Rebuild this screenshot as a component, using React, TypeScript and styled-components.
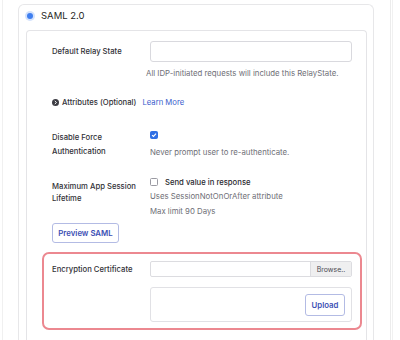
import React from "react";
import styled, { createGlobalStyle } from "styled-components";

const GlobalStyle = createGlobalStyle`
  html, body {
    margin: 0;
    padding: 0;
    background: #ffffff;
  }
  body {
    font-family: Inter, "Liberation Sans", Arial, sans-serif;
    color: #2f2f35;
    overflow: hidden;
  }
`;

const Page = styled.div`
  width: 393px;
  height: 340px;
  border-right: 1px solid #f1f1f1;
  box-sizing: border-box;
`;

const Frame = styled.div`
  margin-left: 2px;
  width: 389px;
  height: 340px;
  border-left: 1px solid #f0f0f0;
  border-right: 1px solid #ececec;
  box-sizing: border-box;
  padding: 4px 0 0 15px;
`;

const OuterCard = styled.section`
  width: 356px;
  height: 340px;
  border: 1px solid #e7e7e9;
  border-bottom: none;
  border-radius: 6px 6px 0 0;
  box-sizing: border-box;
`;

const CardHeader = styled.label`
  display: flex;
  align-items: center;
  gap: 6px;
  height: 25px;
  padding: 0 0 4px 6px;
  box-sizing: border-box;
  font-size: 9.5px;
  color: #1f1f24;
`;

const Radio = styled.span`
  width: 6px;
  height: 6px;
  border-radius: 50%;
  background: #3f7ff0;
  box-shadow: 0 0 0 2px #d3e2fc;
  margin: 0 2px 0 2px;
`;

const InnerCard = styled.div`
  margin: 0 6px 0 7px;
  height: 320px;
  border: 1px solid #e4e4e7;
  border-bottom: none;
  border-radius: 4px 4px 0 0;
  box-sizing: border-box;
  padding: 10px 14px 0 25px;
`;

const FieldRow = styled.div<{ $top?: number }>`
  display: grid;
  grid-template-columns: 98px 1fr;
  margin-top: ${(p) => p.$top ?? 0}px;
`;

const Label = styled.div<{ $pad?: number; $lh?: number }>`
  font-size: 7.7px;
  font-weight: 500;
  line-height: ${(p) => p.$lh ?? 13}px;
  color: #313137;
  padding-top: ${(p) => p.$pad ?? 0}px;
`;

const Control = styled.div`
  display: flex;
  flex-direction: column;
`;

const TextInput = styled.div`
  height: 21px;
  border: 1px solid #d9d9de;
  border-radius: 3px;
  box-sizing: border-box;
  background: #fff;
`;

const Help = styled.div<{ $top?: number; $shift?: number }>`
  font-size: 7.8px;
  line-height: 12px;
  color: #6f6f77;
  margin-top: ${(p) => p.$top ?? 0}px;
  margin-left: ${(p) => p.$shift ?? 0}px;
  white-space: nowrap;
`;

const AttrLine = styled.div`
  display: flex;
  align-items: center;
  gap: 3px;
  margin-top: 16px;
  height: 14px;
  font-size: 7.7px;
  font-weight: 500;
  color: #313137;
`;

const LearnMore = styled.a`
  color: #3a5ccc;
  font-weight: 400;
  margin-left: 3px;
  text-decoration: none;
`;

const CheckLine = styled.div<{ $h: number }>`
  display: flex;
  align-items: center;
  gap: 7px;
  height: ${(p) => p.$h}px;
  font-size: 7.7px;
  font-weight: 500;
  color: #2a2a30;
`;

const Box = styled.span<{ $on?: boolean }>`
  width: 8px;
  height: 8px;
  border-radius: 1.5px;
  box-sizing: border-box;
  display: inline-flex;
  align-items: center;
  justify-content: center;
  background: ${(p) => (p.$on ? "#2f6fe4" : "#fff")};
  border: 1px solid ${(p) => (p.$on ? "#2f6fe4" : "#9a9aa2")};
`;

const OutlineButton = styled.button<{ $w: number; $h: number }>`
  width: ${(p) => p.$w}px;
  height: ${(p) => p.$h}px;
  padding: 0;
  border: 1px solid #b3bbe4;
  border-radius: 3px;
  background: #fff;
  color: #3c50b4;
  font-family: inherit;
  font-size: 7.8px;
  font-weight: 600;
`;

const PreviewButton = styled(OutlineButton)`
  margin-top: 6px;
  display: block;
`;

const Highlight = styled.div`
  margin: 9px -10px 0 -10px;
  border: 2px solid #ec8890;
  border-radius: 7px;
  padding: 7px 8px 6px 8px;
`;

const FileInput = styled.div`
  display: flex;
  height: 16px;
  border: 1px solid #dcdce0;
  border-radius: 2px;
  box-sizing: border-box;
  overflow: hidden;
`;

const FileName = styled.div`
  flex: 1;
`;

const Browse = styled.div`
  width: 40px;
  display: flex;
  align-items: center;
  justify-content: center;
  background: #efeff0;
  border-left: 1px solid #dcdce0;
  font-size: 7px;
  color: #4a4a50;
`;

const Drop = styled.div`
  margin-top: 10px;
  height: 35px;
  border: 1px solid #e1e1e5;
  border-radius: 3px;
  box-sizing: border-box;
  display: flex;
  align-items: center;
  justify-content: flex-end;
  padding-right: 6px;
`;

const Expand = () => (
  <svg width="7" height="7" viewBox="0 0 10 10">
    <circle cx="5" cy="5" r="5" fill="#3d3d44" />
    <path d="M4 2.8 L6.4 5 L4 7.2" stroke="#fff" strokeWidth="1.4" fill="none" />
  </svg>
);

const Tick = () => (
  <svg width="6" height="6" viewBox="0 0 10 10">
    <path d="M1.8 5.2 L4.1 7.4 L8.4 2.6" stroke="#fff" strokeWidth="1.8" fill="none" />
  </svg>
);

export default function App() {
  return (
    <>
      <GlobalStyle />
      <Page>
        <Frame>
          <OuterCard>
            <CardHeader>
              <Radio />
              SAML 2.0
            </CardHeader>
            <InnerCard>
              <FieldRow>
                <Label $pad={4}>Default Relay State</Label>
                <Control>
                  <TextInput />
                  <Help $top={5} $shift={-4}>
                    All IDP-initiated requests will include this RelayState.
                  </Help>
                </Control>
              </FieldRow>

              <AttrLine>
                <Expand />
                Attributes (Optional)
                <LearnMore href="#">Learn More</LearnMore>
              </AttrLine>

              <FieldRow $top={22}>
                <Label $lh={14}>
                  Disable Force
                  <br />
                  Authentication
                </Label>
                <Control>
                  <CheckLine $h={7}>
                    <Box $on>
                      <Tick />
                    </Box>
                  </CheckLine>
                  <Help $top={8}>Never prompt user to re-authenticate.</Help>
                </Control>
              </FieldRow>

              <FieldRow $top={17}>
                <Label $pad={5} $lh={12}>
                  Maximum App Session
                  <br />
                  Lifetime
                </Label>
                <Control>
                  <CheckLine $h={12}>
                    <Box />
                    Send value in response
                  </CheckLine>
                  <Help $top={2}>Uses SessionNotOnOrAfter attribute</Help>
                  <Help $top={3}>Max limit 90 Days</Help>
                </Control>
              </FieldRow>

              <PreviewButton $w={67} $h={20}>
                Preview SAML
              </PreviewButton>

              <Highlight>
                <FieldRow>
                  <Label $pad={2}>Encryption Certificate</Label>
                  <Control>
                    <FileInput>
                      <FileName />
                      <Browse>Browse..</Browse>
                    </FileInput>
                    <Drop>
                      <OutlineButton $w={40} $h={22}>
                        Upload
                      </OutlineButton>
                    </Drop>
                  </Control>
                </FieldRow>
              </Highlight>
            </InnerCard>
          </OuterCard>
        </Frame>
      </Page>
    </>
  );
}
